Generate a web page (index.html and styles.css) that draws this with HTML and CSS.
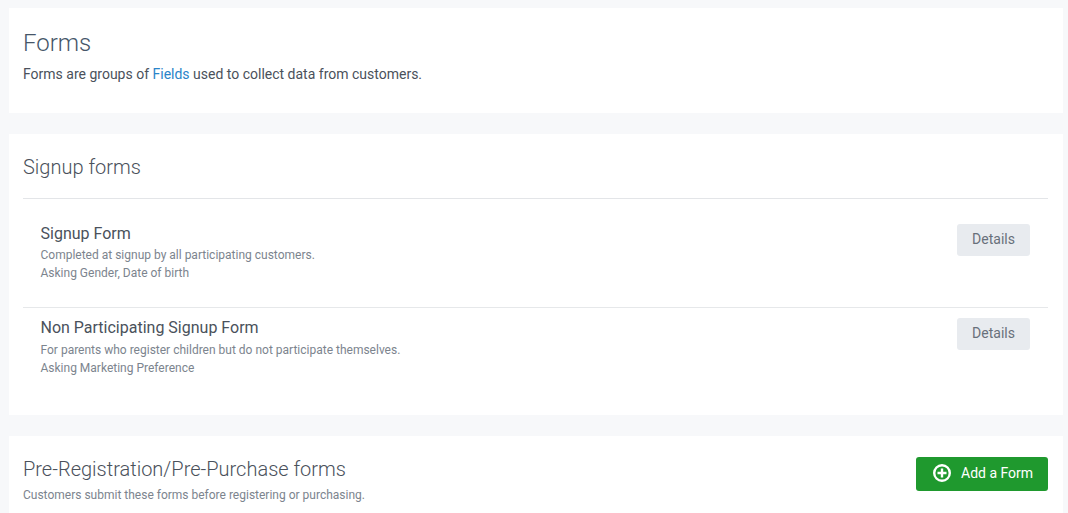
FILE: index.html
```html
<!DOCTYPE html>
<html lang="en">
<head>
  <meta charset="UTF-8" />
  <meta name="viewport" content="width=device-width, initial-scale=1.0" />
  <title>Forms</title>
  <link rel="stylesheet" href="styles.css">
</head>
<body>

  <section class="card intro">
    <h1>Forms</h1>
    <p>Forms are groups of <a href="#">Fields</a> used to collect data from customers.</p>
  </section>

  <section class="card signup">
    <h2 class="section-title">Signup forms</h2>

    <div class="form-row first">
      <div class="form-info">
        <h3>Signup Form</h3>
        <p>Completed at signup by all participating customers.</p>
        <p>Asking Gender, Date of birth</p>
      </div>
      <button class="btn-details">Details</button>
    </div>

    <div class="form-row second">
      <div class="form-info">
        <h3>Non Participating Signup Form</h3>
        <p>For parents who register children but do not participate themselves.</p>
        <p>Asking Marketing Preference</p>
      </div>
      <button class="btn-details">Details</button>
    </div>
  </section>

  <section class="card prereg">
    <div class="prereg-text">
      <h2>Pre-Registration/Pre-Purchase forms</h2>
      <p>Customers submit these forms before registering or purchasing.</p>
    </div>
    <button class="btn-add">
      <svg class="plus-icon" viewBox="0 0 18 18" width="18" height="18" aria-hidden="true">
        <circle cx="9" cy="9" r="7.8" fill="none" stroke="#fff" stroke-width="2.4"/>
        <path d="M9 4.5v9M4.5 9h9" fill="none" stroke="#fff" stroke-width="2.4"/>
      </svg>
      Add a Form
    </button>
  </section>

</body>
</html>
```

FILE: styles.css
```css
html, body {
  height: 100%;
  overflow: hidden;
}

body {
  font-family: Roboto, Arial, sans-serif;
  margin: 0;
  padding: 8px 5px 0 9px;
  box-sizing: border-box;
  background: #f7f8fa;
  color: #4a515b;
}

h1, h2, h3, p {
  margin: 0;
}

.card {
  background: #fff;
  padding: 0 15px 0 14px;
  margin-bottom: 21px;
}

.intro {
  height: 105px;
  box-sizing: border-box;
  padding-top: 20px;
}

.intro h1 {
  font-size: 24px;
  font-weight: 300;
  line-height: 30px;
  color: #465669;
}

.intro p {
  font-size: 14px;
  line-height: 21px;
  margin-top: 6px;
}

.intro a {
  color: #2a84c9;
  text-decoration: none;
}

.signup {
  height: 281px;
  box-sizing: border-box;
  padding-top: 21px;
}

.section-title {
  font-size: 20px;
  font-weight: 300;
  line-height: 24px;
  padding-bottom: 19px;
  border-bottom: 1px solid #e3e5e8;
}

.form-row {
  display: flex;
  justify-content: space-between;
  align-items: flex-start;
  height: 83px;
  padding: 10px 18px 0 17.5px;
}

.form-row.first {
  margin-top: 15px;
  border-bottom: 1px solid #e6e8ea;
}

.form-info h3 {
  font-size: 16px;
  font-weight: 400;
  line-height: 19px;
  margin-bottom: 3px;
}

.form-row.second h3 {
  margin-bottom: 4px;
}

.form-info p {
  font-size: 12px;
  line-height: 18px;
  color: #7c848e;
}

.btn-details {
  width: 73px;
  height: 32px;
  border: none;
  border-radius: 3px;
  background: #e8ebef;
  color: #68707b;
  font-family: inherit;
  font-size: 14px;
  padding: 0 0 2px;
  cursor: pointer;
}

.prereg {
  display: flex;
  justify-content: space-between;
  align-items: flex-start;
  box-sizing: border-box;
  padding-top: 21px;
  height: 77px;
  margin-bottom: 0;
}

.prereg h2 {
  font-size: 20px;
  font-weight: 300;
  line-height: 24px;
}

.prereg p {
  font-size: 12px;
  line-height: 18px;
  color: #7c848e;
  margin-top: 5px;
}

.btn-add {
  display: flex;
  align-items: center;
  gap: 10px;
  width: 132px;
  height: 34px;
  box-sizing: border-box;
  padding: 0 0 2px 17px;
  border: none;
  border-radius: 3px;
  background: #1f992e;
  color: #fff;
  font-family: inherit;
  font-size: 14px;
  cursor: pointer;
}

.plus-icon {
  flex: none;
}
```
